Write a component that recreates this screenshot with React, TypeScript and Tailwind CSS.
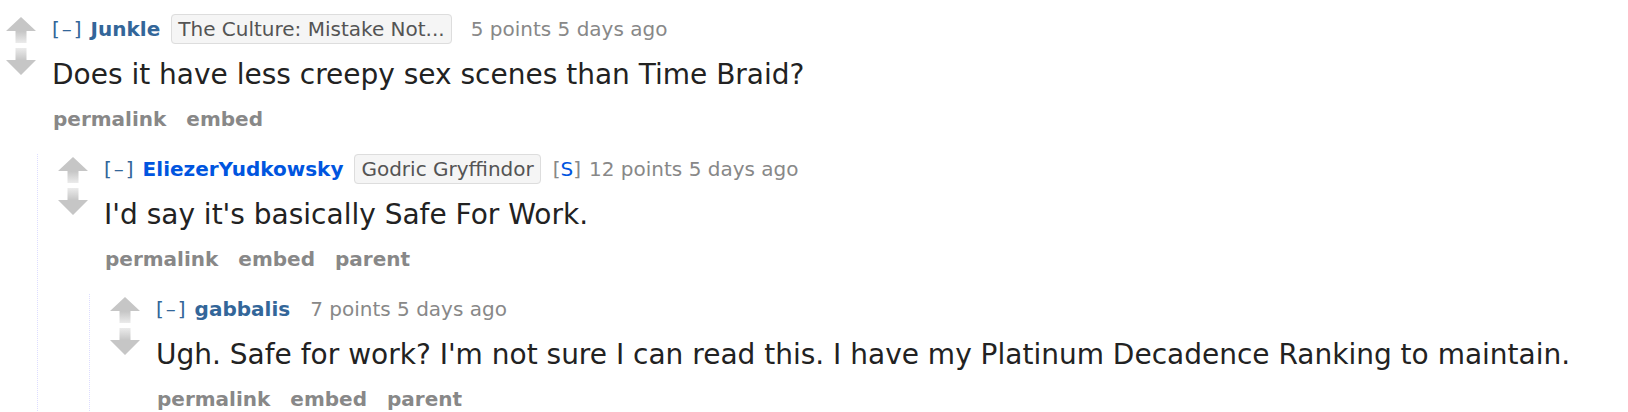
import React from "react";

type CommentData = {
  author: string;
  submitter?: boolean;
  flair?: string;
  points: number;
  age: string;
  body: string;
  buttons: string[];
  replies?: CommentData[];
};

const thread: CommentData = {
  author: "Junkle",
  flair: "The Culture: Mistake Not...",
  points: 5,
  age: "5 days ago",
  body: "Does it have less creepy sex scenes than Time Braid?",
  buttons: ["permalink", "embed"],
  replies: [
    {
      author: "EliezerYudkowsky",
      submitter: true,
      flair: "Godric Gryffindor",
      points: 12,
      age: "5 days ago",
      body: "I'd say it's basically Safe For Work.",
      buttons: ["permalink", "embed", "parent"],
      replies: [
        {
          author: "gabbalis",
          points: 7,
          age: "5 days ago",
          body: "Ugh. Safe for work? I'm not sure I can read this. I have my Platinum Decadence Ranking to maintain.",
          buttons: ["permalink", "embed", "parent"],
        },
      ],
    },
  ],
};

function UpArrow() {
  return (
    <svg width="30" height="26" viewBox="0 0 30 26">
      <defs>
        <linearGradient id="upFade" x1="0" y1="0" x2="0" y2="1">
          <stop offset="0.55" stopColor="#c6c6c6" />
          <stop offset="1" stopColor="#ebebeb" />
        </linearGradient>
      </defs>
      <polygon points="15,0 30,14 20.5,14 20.5,26 9.5,26 9.5,14 0,14" fill="url(#upFade)" />
    </svg>
  );
}

function DownArrow() {
  return (
    <svg width="30" height="27" viewBox="0 0 30 27">
      <defs>
        <linearGradient id="downFade" x1="0" y1="1" x2="0" y2="0">
          <stop offset="0.55" stopColor="#c6c6c6" />
          <stop offset="1" stopColor="#ebebeb" />
        </linearGradient>
      </defs>
      <polygon points="15,27 30,12 20.5,12 20.5,0 9.5,0 9.5,12 0,12" fill="url(#downFade)" />
    </svg>
  );
}

function Comment({ c }: { c: CommentData }) {
  // spacing before the score depends on what sits in front of it
  const scoreGap = c.submitter ? "ml-[8px]" : c.flair ? "ml-[7px]" : "ml-[20px]";

  return (
    <div>
      <div className="flex">
        {/* vote arrows */}
        <div className="flex w-[30px] shrink-0 flex-col gap-[5px]">
          <UpArrow />
          <DownArrow />
        </div>

        <div className="ml-[16px]">
          <p className="whitespace-nowrap text-[20px] leading-[24px] text-[#888]">
            <span className="mr-[7px] tracking-[2px] text-[#369]">[–]</span>
            <span className={`font-bold ${c.submitter ? "text-[#0055df]" : "text-[#369]"}`}>
              {c.author}
            </span>
            {c.flair && (
              <span className="ml-[11px] mr-[12px] rounded-[4px] border border-[#ddd] bg-[#f5f5f5] px-[6px] py-[2px] text-[#545454]">
                {c.flair}
              </span>
            )}
            {c.submitter && (
              <span>
                [<span className="text-[#0055df]">S</span>]
              </span>
            )}
            <span className={scoreGap}>
              {c.points} points {c.age}
            </span>
          </p>

          <div className="mt-[14px] whitespace-nowrap text-[28px] leading-[40px] text-[#222]">
            {c.body}
          </div>

          <ul className="mt-[12px] flex gap-[20px] pl-[1px] text-[20px] font-bold leading-[24px] text-[#888]">
            {c.buttons.map((b) => (
              <li key={b}>{b}</li>
            ))}
          </ul>
        </div>
      </div>

      {c.replies && (
        <div className="ml-[31px] mt-[23px] border-l border-dotted border-[#ddf] pl-[20px] pt-[3px]">
          {c.replies.map((r) => (
            <Comment key={r.author} c={r} />
          ))}
        </div>
      )}
    </div>
  );
}

export default function App() {
  return (
    <div className="h-[412px] w-[1628px] overflow-hidden bg-white pl-[6px] pt-[17px] font-['DejaVu_Sans',sans-serif]">
      <Comment c={thread} />
    </div>
  );
}
